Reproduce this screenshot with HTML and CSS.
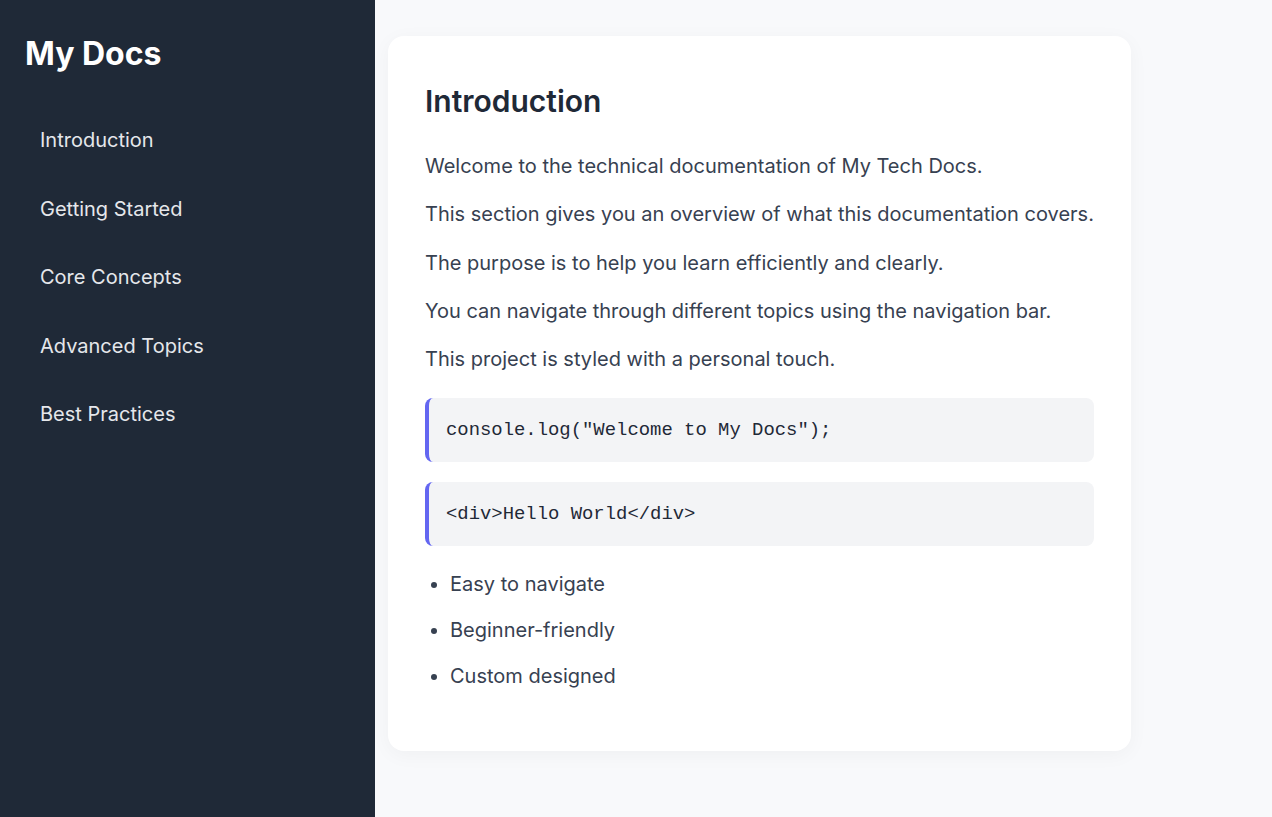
FILE: index.html
```html
<!DOCTYPE html>
<html lang="en">
<head>
<meta charset="utf-8">
<title>My Docs</title>
<link rel="stylesheet" href="styles.css">
</head>
<body>
<nav class="sidebar">
  <h1 class="brand">My Docs</h1>
  <ul class="nav">
    <li><a href="#">Introduction</a></li>
    <li><a href="#">Getting Started</a></li>
    <li><a href="#">Core Concepts</a></li>
    <li><a href="#">Advanced Topics</a></li>
    <li><a href="#">Best Practices</a></li>
  </ul>
</nav>
<main class="main">
  <section class="card">
    <h2 class="title">Introduction</h2>
    <p>Welcome to the technical documentation of My Tech Docs.</p>
    <p>This section gives you an overview of what this documentation covers.</p>
    <p>The purpose is to help you learn efficiently and clearly.</p>
    <p>You can navigate through different topics using the navigation bar.</p>
    <p>This project is styled with a personal touch.</p>
    <pre class="code">console.log("Welcome to My Docs");</pre>
    <pre class="code">&lt;div&gt;Hello World&lt;/div&gt;</pre>
    <ul class="list">
      <li>Easy to navigate</li>
      <li>Beginner-friendly</li>
      <li>Custom designed</li>
    </ul>
  </section>
</main>
</body>
</html>
```

FILE: styles.css
```css
* { box-sizing: border-box; }
html, body { height: 100%; }
body {
  margin: 0;
  display: flex;
  font-family: Inter, "Noto Sans", sans-serif;
  background: #f8f9fb;
  color: #374151;
}
.sidebar {
  width: 375px;
  flex: none;
  min-height: 817px;
  background: #1f2937;
  padding: 34px 25px;
}
.brand {
  margin: 0 0 42px;
  color: #ffffff;
  font-size: 32px;
  font-weight: 700;
  line-height: 40px;
}
.nav {
  list-style: none;
  margin: 0;
  padding: 0;
  display: flex;
  flex-direction: column;
  gap: 20.5px;
}
.nav a {
  display: block;
  padding: 12px 15px;
  color: #e5e7eb;
  text-decoration: none;
  font-size: 20px;
  line-height: 24px;
}
.main {
  flex: 1;
  padding: 36px 13px;
}
.card {
  width: 743px;
  background: #ffffff;
  border-radius: 16px;
  box-shadow: 0 4px 20px rgba(0,0,0,0.04);
  padding: 45px 37px 59px;
}
.title {
  margin: 0 0 29px;
  font-size: 30px;
  line-height: 40px;
  font-weight: 600;
  color: #1f2937;
}
.card p {
  margin: 0 0 16.3px;
  font-size: 20px;
  line-height: 32px;
}
.code {
  margin: 23px 0 20px;
  background: #f3f4f6;
  border-left: 4px solid #6366f1;
  border-radius: 8px;
  padding: 20px 17px;
  font-family: "Liberation Mono", "Courier New", monospace;
  font-size: 18.9px;
  line-height: 24px;
  color: #1f2937;
}
.code + .code { margin-top: 20px; }
.list {
  margin: 22px 0 0;
  padding-left: 25px;
  font-size: 20px;
  line-height: 32px;
}
.list li { margin-bottom: 14px; }
.list li:last-child { margin-bottom: 0; }
```
